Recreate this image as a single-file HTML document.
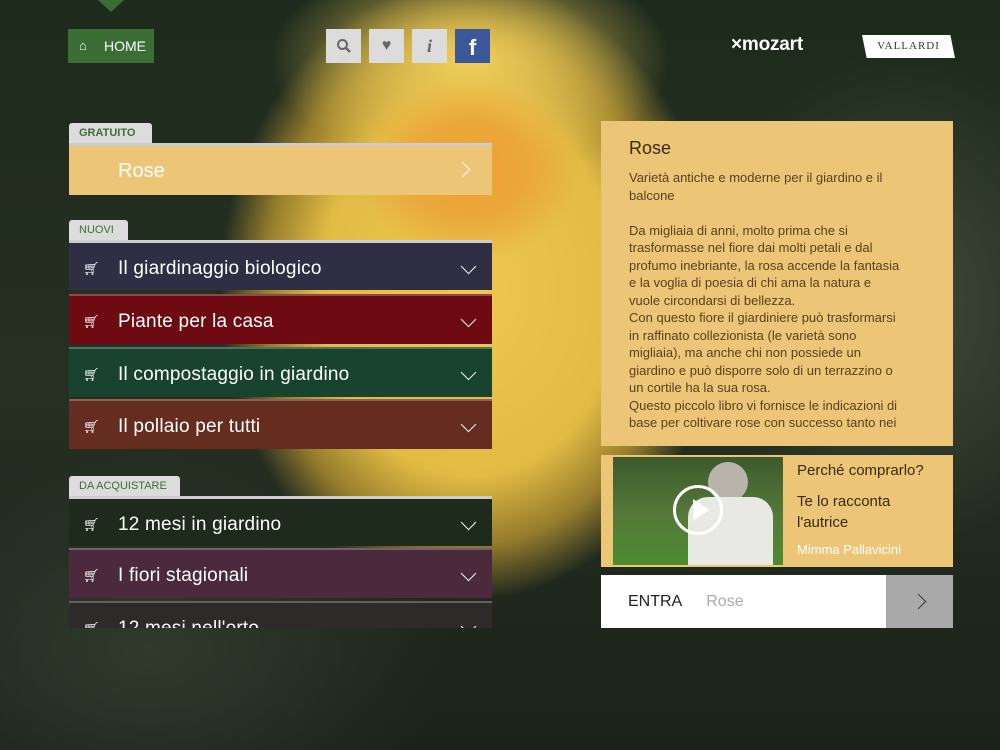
<!DOCTYPE html>
<html><head><meta charset="utf-8"><style>
*{margin:0;padding:0;box-sizing:border-box}
body{width:1000px;height:750px;overflow:hidden;position:relative;font-family:"Liberation Sans",sans-serif;
background:
radial-gradient(ellipse 110px 90px at 470px 170px,#f0a030 0%,#eaa83a 55%,rgba(235,180,60,0) 100%),
radial-gradient(ellipse 200px 110px at 470px 60px,#f2cf5a 0%,rgba(240,200,80,0) 100%),
radial-gradient(ellipse 250px 310px at 470px 290px,#eec84e 0%,#e2bb44 60%,rgba(200,160,50,.7) 82%,rgba(40,50,30,0) 100%),
radial-gradient(ellipse 200px 250px at 900px 300px,#3f4a3c 0%,rgba(40,50,40,0) 100%),
radial-gradient(ellipse 300px 200px at 150px 650px,#2f3a2c 0%,rgba(30,40,30,0) 100%),
linear-gradient(#1d2a1c,#263022 50%,#1b221a);}
.abs{position:absolute}
.tri{left:98px;top:0;width:0;height:0;border-left:13px solid transparent;border-right:13px solid transparent;border-top:12px solid #3a6e35}
.home{left:68px;top:29px;width:86px;height:34px;background:#3a6e35;color:#fff;font-size:14px;line-height:34px;padding-left:36px}
.ib{top:29px;width:35px;height:34px;background:#dcdcdc;color:#666;text-align:center;line-height:34px;font-size:16px}
.tab{background:#dcdcdc;color:#3a6e35;font-size:11px;height:20px;line-height:21px;padding:0 10px;border-radius:3px 3px 0 0}
.row{left:69px;width:423px;height:50px;color:#fff;font-size:19px;line-height:51px;padding-left:49px;border-top:2px solid rgba(255,255,255,.25);overflow:hidden;letter-spacing:.2px}
.cart{position:absolute;left:14px;top:0;font-size:13px}
.chev{position:absolute;right:18px;top:18px;width:11px;height:11px;border-right:1.5px solid #fff;border-bottom:1.5px solid #fff;transform:rotate(45deg)}
.panel{left:601px;top:121px;width:352px;height:325px;background:#edc576;padding:17px 28px;color:#5a4020;overflow:hidden}
.panel h1{font-weight:normal;font-size:18px;color:#3a2a12;margin-bottom:10px}
.panel p{font-size:13px;line-height:17.5px;white-space:nowrap}
</style></head><body>
<div class="abs tri"></div>
<div class="abs home"><span style="position:absolute;left:11px;top:0;font-size:13px">&#8962;</span>HOME</div>
<div class="abs ib" style="left:326px"><svg width="16" height="16" viewBox="0 0 16 16" style="margin-top:9px"><circle cx="6.5" cy="6.5" r="4.5" fill="none" stroke="#666" stroke-width="2"/><path d="M10 10l4 4" stroke="#666" stroke-width="2.5"/></svg></div>
<div class="abs ib" style="left:369px">&#9829;</div>
<div class="abs ib" style="left:412px;font-family:'Liberation Serif',serif;font-style:italic;font-weight:bold;font-size:18px">i</div>
<div class="abs ib" style="left:455px;background:#3b5998;color:#fff;font-weight:bold;font-size:22px;line-height:38px">f</div>
<div class="abs" style="left:731px;top:34px;color:#fff;font-weight:bold;font-size:19px;letter-spacing:-.2px">×mozart</div>
<div class="abs" style="left:862px;top:35px;width:93px;height:23px;background:#fff;clip-path:polygon(0 0,95% 0,100% 100%,5% 100%);font-family:'Liberation Serif',serif;font-size:11px;color:#333;text-align:center;line-height:23px;letter-spacing:1px">VALLARDI</div>

<div class="abs tab" style="left:69px;top:123px;width:83px;font-weight:bold">GRATUITO</div>
<div class="abs" style="left:69px;top:143px;width:423px;height:52px;background:#edc576;border-top:3px solid #ccc;color:#fff;font-size:20px;line-height:50px;padding-left:49px">Rose<div class="chev" style="transform:rotate(-45deg);right:24px;top:18px"></div></div>

<div class="abs tab" style="left:69px;top:220px;width:59px">NUOVI</div>
<div class="abs row" style="top:240px;background:#2f2e45;border-top:3px solid #ccc"><span class="cart">🛒︎</span>Il giardinaggio biologico<div class="chev"></div></div>
<div class="abs row" style="top:294px;background:#6e0a12"><span class="cart">🛒︎</span>Piante per la casa<div class="chev"></div></div>
<div class="abs row" style="top:347px;background:#17432f"><span class="cart">🛒︎</span>Il compostaggio in giardino<div class="chev"></div></div>
<div class="abs row" style="top:399px;background:#642d20"><span class="cart">🛒︎</span>Il pollaio per tutti<div class="chev"></div></div>

<div class="abs tab" style="left:69px;top:476px;width:111px">DA ACQUISTARE</div>
<div class="abs row" style="top:496px;background:#1e2a1b;border-top:3px solid #ccc"><span class="cart">🛒︎</span>12 mesi in giardino<div class="chev"></div></div>
<div class="abs row" style="top:548px;background:#4a2a3c"><span class="cart">🛒︎</span>I fiori stagionali<div class="chev"></div></div>
<div class="abs row" style="top:601px;height:27px;background:#2e2a2a"><span class="cart">🛒︎</span>12 mesi nell'orto<div class="chev"></div></div>

<div class="abs panel"><h1>Rose</h1><p>Varietà antiche e moderne per il giardino e il<br>balcone<br><br>Da migliaia di anni, molto prima che si<br>trasformasse nel fiore dai molti petali e dal<br>profumo inebriante, la rosa accende la fantasia<br>e la voglia di poesia di chi ama la natura e<br>vuole circondarsi di bellezza.<br>Con questo fiore il giardiniere può trasformarsi<br>in raffinato collezionista (le varietà sono<br>migliaia), ma anche chi non possiede un<br>giardino e può disporre solo di un terrazzino o<br>un cortile ha la sua rosa.<br>Questo piccolo libro vi fornisce le indicazioni di<br>base per coltivare rose con successo tanto nei</p></div>

<div class="abs" style="left:601px;top:455px;width:352px;height:112px;background:#edc576"></div>
<div class="abs" style="left:613px;top:457px;width:170px;height:108px;background:linear-gradient(180deg,#3c5a2c 0%,#557a3a 55%,#4d8a30 100%);overflow:hidden">
<div class="abs" style="left:95px;top:5px;width:40px;height:40px;border-radius:50%;background:#b9b4aa"></div>
<div class="abs" style="left:75px;top:40px;width:85px;height:70px;background:#e8e8e4;border-radius:20px 20px 0 0"></div>
<div class="abs" style="left:60px;top:28px;width:50px;height:50px;border:3px solid #fff;border-radius:50%"></div>
<div class="abs" style="left:80px;top:42px;width:0;height:0;border-left:16px solid #fff;border-top:11px solid transparent;border-bottom:11px solid transparent"></div>
</div>
<div class="abs" style="left:797px;top:462px;font-size:15px;color:#3a2a12">Perché comprarlo?</div>
<div class="abs" style="left:797px;top:491px;font-size:15px;line-height:21px;color:#3a2a12">Te lo racconta<br>l'autrice</div>
<div class="abs" style="left:797px;top:542px;font-size:13px;color:#fff">Mimma Pallavicini</div>

<div class="abs" style="left:601px;top:575px;width:285px;height:53px;background:#fff;font-size:16px;line-height:54px;padding-left:27px;color:#222">ENTRA<span style="color:#aaa;margin-left:24px">Rose</span></div>
<div class="abs" style="left:886px;top:575px;width:67px;height:53px;background:#a9a9a9"><div class="chev" style="border-color:#333;transform:rotate(-45deg);right:29px;top:21px"></div></div>
</body></html>
